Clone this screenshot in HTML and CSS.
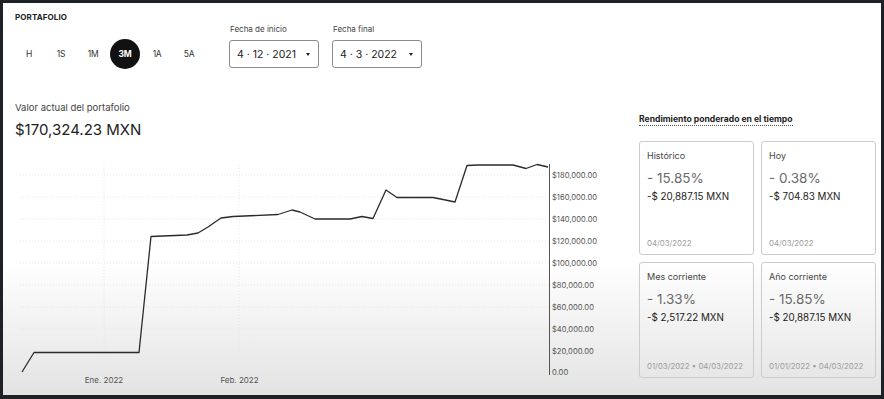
FILE: index.html
```html
<!doctype html>
<html>
<head>
    <title>Portafolio</title>
    <link rel="stylesheet" href="styles.css">
</head>
<body>
    <div class="frame">
        <div class="header">
            <h1 class="title">PORTAFOLIO</h1>
        </div>
        <div class="controls">
            <div class="ranges">
                <button class="range">H</button>
                <button class="range">1S</button>
                <button class="range">1M</button>
                <button class="range active">3M</button>
                <button class="range">1A</button>
                <button class="range">5A</button>
            </div>
            <div class="dates">
                <div class="date-field">
                    <label class="date-label">Fecha de inicio</label>
                    <div class="date-box"><span>4 · 12 · 2021</span><span class="arrow"></span></div>
                </div>
                <div class="date-field">
                    <label class="date-label">Fecha final</label>
                    <div class="date-box"><span>4 · 3 · 2022</span><span class="arrow"></span></div>
                </div>
            </div>
        </div>
        <div class="main">
            <div class="left">
                <p class="value-label">Valor actual del portafolio</p>
                <p class="value">$170,324.23 MXN</p>
                <svg class="chart" width="625" height="257" viewBox="3 140 625 257">
                    <g class="grid">
                        <line x1="20" y1="175" x2="549" y2="175"/>
                        <line x1="20" y1="197" x2="549" y2="197"/>
                        <line x1="20" y1="219" x2="549" y2="219"/>
                        <line x1="20" y1="241" x2="549" y2="241"/>
                        <line x1="20" y1="263" x2="549" y2="263"/>
                        <line x1="20" y1="285" x2="549" y2="285"/>
                        <line x1="20" y1="307" x2="549" y2="307"/>
                        <line x1="20" y1="329" x2="549" y2="329"/>
                        <line x1="20" y1="351" x2="549" y2="351"/>
                        <line x1="20" y1="372.5" x2="549" y2="372.5"/>
                        <line x1="104" y1="165" x2="104" y2="372"/>
                        <line x1="239" y1="165" x2="239" y2="372"/>
                    </g>
                    <line class="axis" x1="549.5" y1="164" x2="549.5" y2="375"/>
                    <polyline class="line" points="22,372 34,352.5 139,352.5 151,236.5 187,235 198,233 208,227 221,218 233,216.5 278,214.5 292,210 300,212 315,219 350,219 362,216.5 373,218.5 386,190 397,197.5 433,197.5 443,199.5 455,202 467,165.5 478,165 513,165 526,168.5 537,164.5 548,167"/>
                    <g class="ylabels">
                        <text x="552" y="178">$180,000.00</text>
                        <text x="552" y="200">$160,000.00</text>
                        <text x="552" y="222">$140,000.00</text>
                        <text x="552" y="244">$120,000.00</text>
                        <text x="552" y="266">$100,000.00</text>
                        <text x="552" y="288">$80,000.00</text>
                        <text x="552" y="310">$60,000.00</text>
                        <text x="552" y="332">$40,000.00</text>
                        <text x="552" y="354">$20,000.00</text>
                        <text x="552" y="375">0.00</text>
                    </g>
                    <g class="xlabels">
                        <text x="104" y="383">Ene. 2022</text>
                        <text x="239.5" y="383">Feb. 2022</text>
                    </g>
                </svg>
            </div>
            <div class="right">
                <h2 class="section-title"><span>Rendimiento ponderado en el tiempo</span></h2>
                <div class="cards">
                    <div class="card">
                        <p class="card-label">Histórico</p>
                        <p class="card-pct">- 15.85%</p>
                        <p class="card-amount">-$ 20,887.15 MXN</p>
                        <p class="card-date">04/03/2022</p>
                    </div>
                    <div class="card">
                        <p class="card-label">Hoy</p>
                        <p class="card-pct">- 0.38%</p>
                        <p class="card-amount">-$ 704.83 MXN</p>
                        <p class="card-date">04/03/2022</p>
                    </div>
                    <div class="card">
                        <p class="card-label">Mes corriente</p>
                        <p class="card-pct">- 1.33%</p>
                        <p class="card-amount">-$ 2,517.22 MXN</p>
                        <p class="card-date">01/03/2022 • 04/03/2022</p>
                    </div>
                    <div class="card">
                        <p class="card-label">Año corriente</p>
                        <p class="card-pct">- 15.85%</p>
                        <p class="card-amount">-$ 20,887.15 MXN</p>
                        <p class="card-date">01/01/2022 • 04/03/2022</p>
                    </div>
                </div>
            </div>
        </div>
    </div>
</body>
</html>
```

FILE: styles.css
```css
html, body {
    margin: 0;
    height: 100%;
}
body {
    background-color: #1e2226;
    font-family: 'Inter', 'Liberation Sans', sans-serif;
    color: #222222;
    padding: 3px 3px 4px 3px;
    box-sizing: border-box;
}
p, h1, h2 {
    margin: 0;
}
.frame {
    height: 100%;
    background: linear-gradient(to bottom, #ffffff 0%, #ffffff 66%, #e3e3e3 100%);
    overflow: hidden;
}
.header {
    padding: 9px 0 0 12px;
}
.title {
    font-size: 8px;
    line-height: 10px;
    font-weight: 700;
    letter-spacing: 0.1px;
}
.controls {
    display: flex;
    align-items: flex-end;
    padding-left: 11px;
    margin-top: 1px;
}
.ranges {
    display: flex;
    gap: 2px;
    margin-top: 16px;
    margin-bottom: -1px;
}
.range {
    width: 30px;
    height: 30px;
    border: none;
    border-radius: 50%;
    background: none;
    font-family: 'Inter', 'Liberation Sans', sans-serif;
    font-size: 8.5px;
    color: #333333;
    padding: 0;
    letter-spacing: -0.3px;
}
.range.active {
    background-color: #111111;
    color: #ffffff;
    font-weight: 700;
}
.dates {
    display: flex;
    gap: 13px;
    margin-left: 25px;
}
.date-field {
    display: flex;
    flex-direction: column;
}
.date-label {
    font-size: 8px;
    line-height: 10px;
    color: #444444;
    margin-left: 1px;
    margin-bottom: 6px;
}
.date-box {
    width: 90px;
    height: 28px;
    box-sizing: border-box;
    border: 1px solid #8a8a8a;
    border-radius: 3px;
    display: flex;
    align-items: center;
    justify-content: space-between;
    padding: 0 8px 0 7px;
    font-size: 10.5px;
    color: #222222;
}
.arrow {
    width: 0;
    height: 0;
    border-left: 2.5px solid transparent;
    border-right: 2.5px solid transparent;
    border-top: 3px solid #222222;
}
.main {
    display: flex;
    margin-top: 33px;
}
.left {
    width: 625px;
    flex: none;
}
.value-label {
    font-size: 9.5px;
    line-height: 14px;
    color: #444444;
    padding-left: 12px;
}
.value {
    font-size: 15px;
    line-height: 20px;
    color: #222222;
    padding-left: 12px;
    margin-top: 5px;
}
.chart {
    display: block;
}
.grid line {
    stroke: #e6e6e6;
    stroke-width: 1;
    stroke-dasharray: 1 2;
}
.axis {
    stroke: #555555;
    stroke-width: 1;
}
.line {
    fill: none;
    stroke: #2a2a2a;
    stroke-width: 1.3;
    stroke-linejoin: round;
}
.ylabels text {
    font-size: 7.6px;
    fill: #555555;
}
.xlabels text {
    font-size: 8px;
    fill: #555555;
    text-anchor: middle;
}
.right {
    padding-left: 11px;
    padding-top: 12px;
}
.section-title {
    font-size: 8.6px;
    line-height: 12px;
    font-weight: 700;
    color: #222222;
}
.section-title span {
    border-bottom: 1px dotted #555555;
    padding-bottom: 1px;
}
.cards {
    display: grid;
    grid-template-columns: 115px 115px;
    grid-template-rows: 114px 116px;
    gap: 7px;
    margin-top: 16px;
}
.card {
    border: 1px solid #cccccc;
    border-radius: 3px;
    display: flex;
    flex-direction: column;
    padding: 8px 7px 6px 7px;
}
.card-label {
    font-size: 9px;
    line-height: 12px;
    color: #444444;
}
.card-pct {
    font-size: 13.5px;
    line-height: 16px;
    color: #6a6a6a;
    margin-top: 8px;
}
.card-amount {
    font-size: 9.8px;
    line-height: 12px;
    color: #222222;
    margin-top: 5px;
}
.card-date {
    font-size: 7.8px;
    line-height: 10px;
    color: #9a9a9a;
    margin-top: auto;
}
```
